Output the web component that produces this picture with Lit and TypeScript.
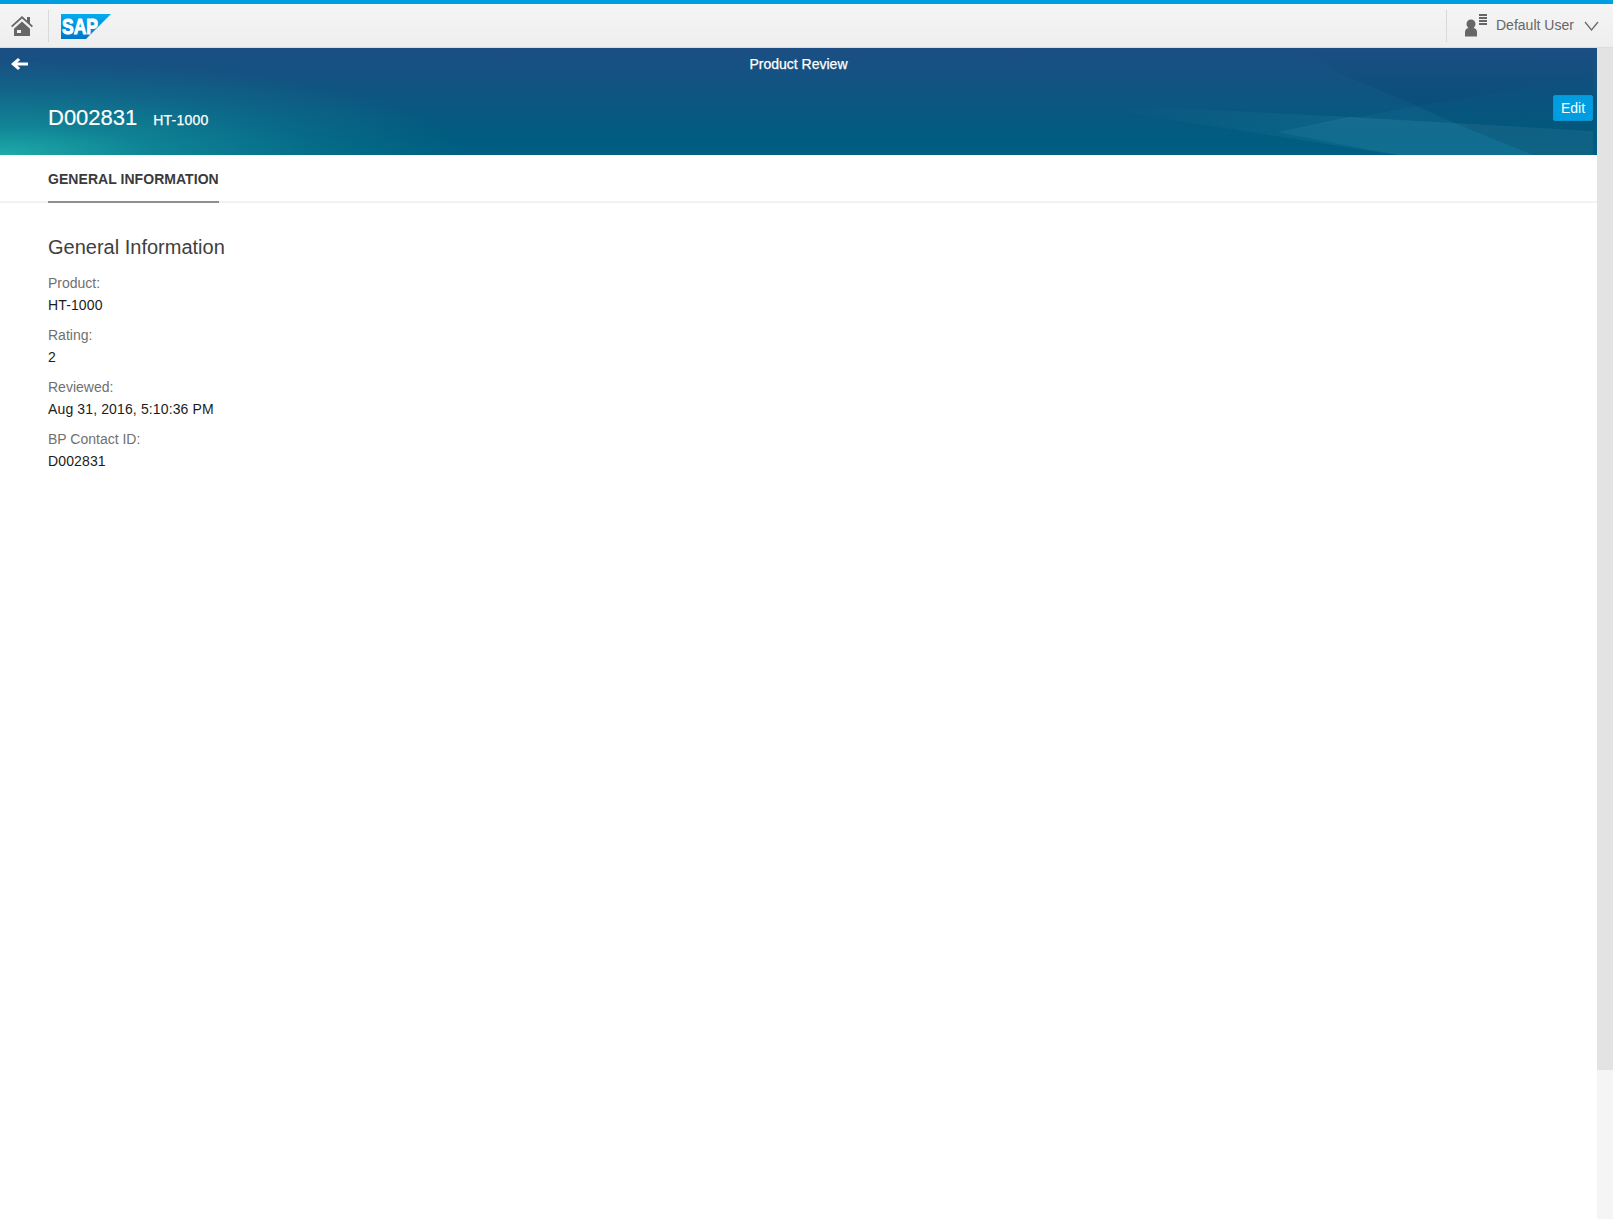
import { LitElement, html, css, svg } from "lit";
import { customElement } from "lit/decorators.js";

const fields = [
  ["Product:", "HT-1000"],
  ["Rating:", "2"],
  ["Reviewed:", "Aug 31, 2016, 5:10:36 PM"],
  ["BP Contact ID:", "D002831"],
];

@customElement("app-root")
export class AppRoot extends LitElement {
  static styles = css`
    :host { display: flex; flex-direction: column; height: 100vh; overflow: hidden; background: #fff; font-family: "Liberation Sans", Arial, sans-serif; font-size: 14px; }
    .stripe { height: 4px; background: #009de0; flex: none; }
    .shell { height: 44px; box-sizing: border-box; flex: none; display: flex; align-items: center; background: linear-gradient(#f5f5f5, #eeeeee); border-bottom: 1px solid #dcdcdc; color: #666; }
    .home { width: 48px; height: 32px; box-sizing: content-box; padding: 0; display: flex; align-items: center; border-right: 1px solid #d9d9d9; }
    .home svg { margin-left: 11px; display: block; }
    .logo { margin-left: 12px; margin-top: 1px; display: block; }
    .spacer { flex: 1; }
    .user { height: 32px; display: flex; align-items: center; border-left: 1px solid #d9d9d9; padding-left: 18px; padding-right: 14px; }
    .user .name { margin: 0 10px 0 8px; line-height: 1; padding-bottom: 2px; letter-spacing: .02px; }
    .body { flex: 1; display: flex; min-height: 0; }
    .main { flex: 1; min-width: 0; }
    .scroll { width: 16px; flex: none; display: flex; flex-direction: column; background: #f5f5f5; }
    .thumb { height: 1022px; background: #e3e3e3; }
    .hero { position: relative; height: 107px; box-sizing: border-box; color: #fff; overflow: hidden;
      background:
        radial-gradient(ellipse 470px 95px at 0 107px, #1eaaa9 0%, rgba(30,170,169,.5) 32%, rgba(30,170,169,.18) 68%, rgba(30,170,169,0) 100%),
        linear-gradient(#1c4e83 0%, #005c80 85%, #005f82 100%); }
    .shapes { position: absolute; inset: 0; width: 100%; height: 100%; }
    .nav { position: relative; height: 32px; display: flex; align-items: center; justify-content: center; -webkit-text-stroke: .25px #fff; }
    .back { position: absolute; left: 11px; top: 10px; display: block; }
    .title { position: relative; display: flex; align-items: baseline; padding: 25px 4px 0 48px; height: 75px; box-sizing: border-box; }
    .id { font-size: 22px; line-height: 26px; -webkit-text-stroke: .15px #fff; }
    .sub { margin-left: 16px; font-size: 14px; line-height: 26px; letter-spacing: .2px; -webkit-text-stroke: .25px #fff; }
    .edit { margin-left: auto; align-self: flex-start; margin-top: -10px; width: 40px; height: 26px; box-sizing: border-box; border: 1px solid #0a95d2; border-radius: 2px; background: #009de0; color: #fff; font: 14px "Liberation Sans", Arial, sans-serif; padding: 0; }
    .tabs { height: 48px; box-sizing: border-box; border-bottom: 2px solid #f2f2f2; padding-left: 48px; display: flex; }
    .tab { height: 48px; box-sizing: border-box; border-bottom: 2px solid #8f8f8f; line-height: 49px; font-weight: 700; font-size: 14px; letter-spacing: .05px; color: #3a3a3a; }
    .content { padding: 31px 48px 0; }
    h2 { margin: 0 0 12px; font-size: 20px; font-weight: 400; line-height: 26px; color: #404040; }
    .field { margin-bottom: 8px; }
    .label { color: #707070; line-height: 22px; }
    .value { color: #1c1c1c; line-height: 22px; letter-spacing: .13px; }
  `;

  render() {
    return html`
      <div class="stripe"></div>
      <header class="shell">
        <div class="home">
          <svg width="22" height="20" viewBox="0 0 22 20" fill="#666">
            <path d="M11 0 0 10l1.200 1.300L11 2.600l9.800 8.700L22 10l-3-2.700V1h-3v3.600z"/>
            <path d="M3 12.700 11 5.500l8 7.200V20H3zM6 14v3h4v-3z" fill-rule="evenodd"/>
          </svg>
        </div>
        <svg class="logo" width="50" height="25" viewBox="0 0 50 25">
          <defs><linearGradient id="sap" x1="0" y1="0" x2="0" y2="1"><stop offset="0" stop-color="#00aeef"/><stop offset="1" stop-color="#0076cb"/></linearGradient></defs>
          <polygon points="0,0 50,0 25,25 0,25" fill="url(#sap)"/>
          <text x="1" y="20" fill="#fff" font-family="Liberation Sans, Arial, sans-serif" font-weight="700" font-size="22" textLength="36" lengthAdjust="spacingAndGlyphs" stroke="#fff" stroke-width="1">SAP</text>
        </svg>
        <div class="spacer"></div>
        <div class="user">
          <svg width="23" height="23" viewBox="0 0 23 23" fill="#666">
            <circle cx="6" cy="10" r="4.500"/>
            <path d="M0 22.500v-4.500C0 15.500 2 14 4 14h4c2 0 4 1.500 4 4v4.500z"/>
            <path d="M14 0h8v2h-8zM14 3h8v2h-8zM14 6h8v2h-8zM14 9h8v2h-8z"/>
          </svg>
          <span class="name">Default User</span>
          <svg width="15" height="10" viewBox="0 0 15 10" fill="none" stroke="#666" stroke-width="1.200"><path d="M1 1l6.500 8L14 1"/></svg>
        </div>
      </header>
      <div class="body">
        <div class="main">
          <section class="hero">
            <svg class="shapes" viewBox="0 0 1597 107" preserveAspectRatio="none" aria-hidden="true">
              ${svg`
                <defs>
                  <linearGradient id="dk" x1="0" y1="0" x2="0" y2="1"><stop offset="0" stop-color="#0a3a6a" stop-opacity="0"/><stop offset="1" stop-color="#0a3a6a" stop-opacity=".3"/></linearGradient>
                  <linearGradient id="band" gradientUnits="userSpaceOnUse" x1="1100" y1="0" x2="1340" y2="0"><stop offset="0" stop-color="#3d9ab5" stop-opacity="0"/><stop offset="1" stop-color="#3d9ab5" stop-opacity=".14"/></linearGradient>
                </defs>
                <polygon points="1338,25 1417,58 1593,29 1593,0 1300,0" fill="url(#dk)"/>
                <polygon points="1417,58 1593,29 1593,83 1455,75" fill="#003f6b" opacity=".12"/>
                <polygon points="1061,54.500 1350,69 1455,75 1533,107 1397,107" fill="url(#band)"/>
                <polygon points="1277,84 1350,69 1455,75 1533,107 1397,107" fill="#4aa5c0" opacity=".14"/>
                <polygon points="1277,84 1417,58 1455,75 1350,69" fill="#4aa5c0" opacity=".07"/>
                <polygon points="1455,75 1593,83 1593,107 1533,107" fill="#6a8a96" opacity=".14"/>
              `}
            </svg>
            <div class="nav">
              <svg class="back" width="17" height="12" viewBox="0 0 17 12" fill="#fff"><path d="M7 0 9.200 2.100 6.300 4.500H17v3H6.300l2.900 2.400L7 12 0 6z"/></svg>
              <span>Product Review</span>
            </div>
            <div class="title">
              <span class="id">D002831</span>
              <span class="sub">HT-1000</span>
              <button class="edit">Edit</button>
            </div>
          </section>
          <nav class="tabs"><div class="tab">GENERAL INFORMATION</div></nav>
          <div class="content">
            <h2>General Information</h2>
            ${fields.map(([l, v]) => html`<div class="field"><div class="label">${l}</div><div class="value">${v}</div></div>`)}
          </div>
        </div>
        <div class="scroll"><div class="thumb"></div></div>
      </div>
    `;
  }
}
